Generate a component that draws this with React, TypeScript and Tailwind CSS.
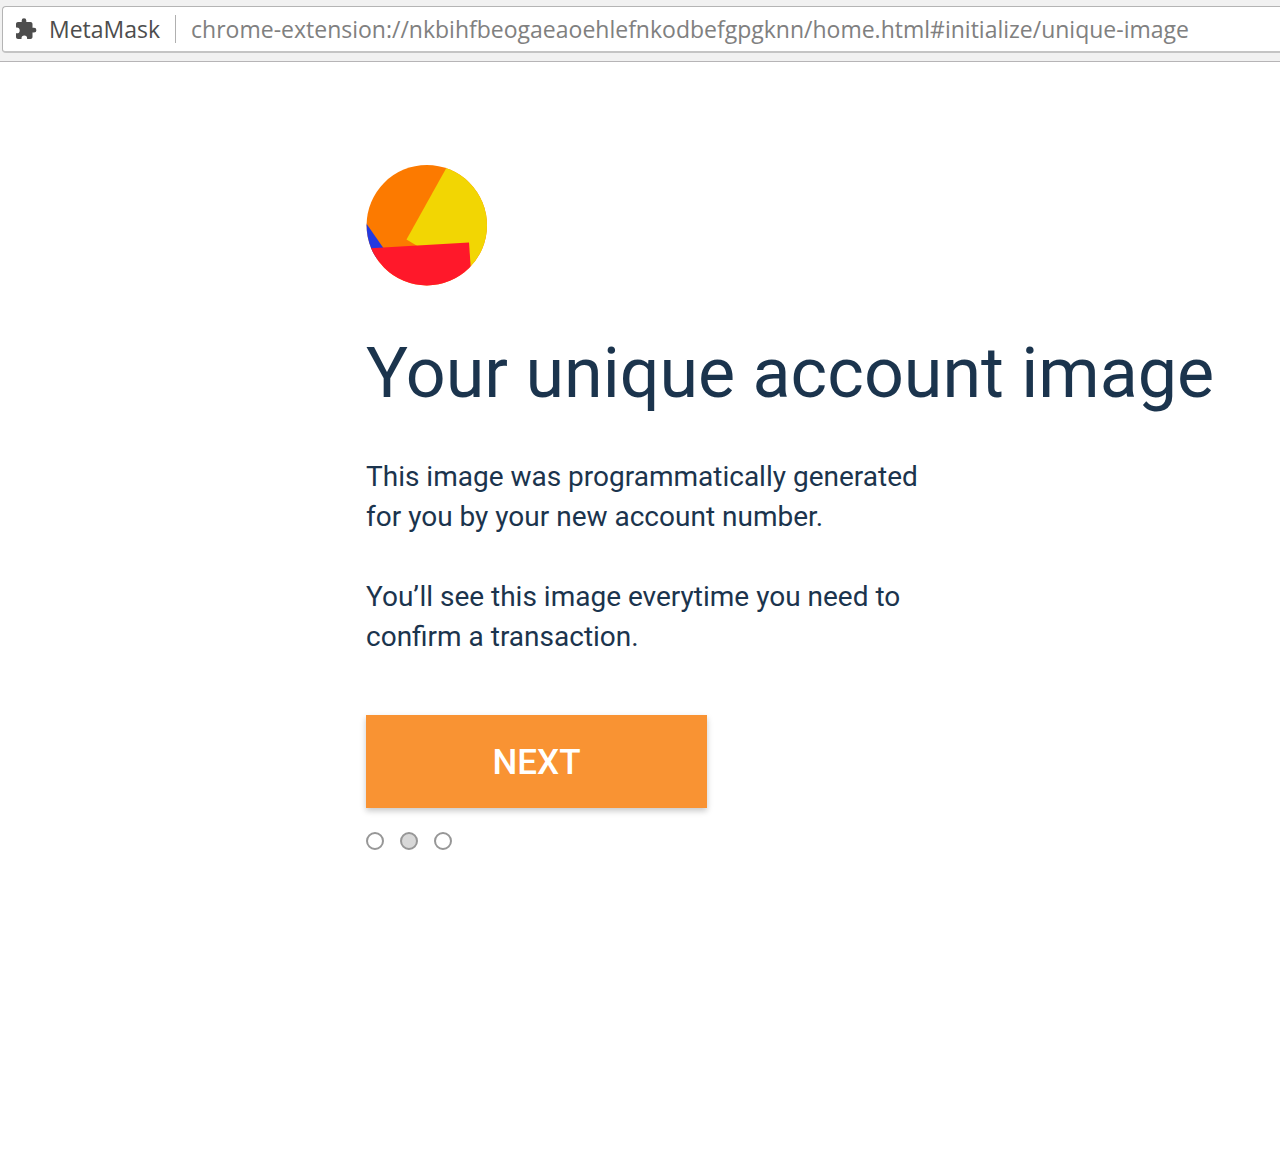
import React from "react";

const dots = [false, true, false];

export default function App() {
  return (
    <div className="min-h-screen bg-white font-['Roboto',sans-serif] text-[#1b344d]">
      <header className="border-b border-[#b6b4b6] bg-[#f1f1f1] pt-1.5 pb-2 pl-0.5">
        <form className="flex h-[47px] items-center rounded-l-sm border border-r-0 border-b-2 border-[#b4b4b4] border-b-[#c4c4c4] bg-white pl-3 font-['Open_Sans','Noto_Sans',sans-serif] text-[23px]" onSubmit={(e) => e.preventDefault()}>
          <svg viewBox="1 0 24 24" className="mr-2.5 size-6 shrink-0 fill-[#4d4d4d]" aria-hidden="true">
            <path d="M21 10.800H19.500V7c0-1.100-.9-2-2-2h-4.200V3.500a2.300 2.300 0 0 0-4.600 0V5H5c-1.100 0-2 .9-2 2v3.500h.8a2.900 2.900 0 0 1 0 5.800H3V20c0 1.100.9 2 2 2h3.500v-.8a2.800 2.800 0 0 1 5.600 0V22h3.400c1.100 0 2-.9 2-2v-4.400H21a2.400 2.400 0 0 0 0-4.800z" transform="translate(-1 0)" />
          </svg>
          <span className="text-[#4d4d4d]">MetaMask</span>
          <span className="mx-[15px] h-7 w-px bg-[#b0b0b0]" />
          <input aria-label="Address" readOnly className="min-w-0 flex-1 bg-transparent text-[#808080] outline-none" value="chrome-extension://nkbihfbeogaeaoehlefnkodbefgpgknn/home.html#initialize/unique-image" />
        </form>
      </header>
      <main className="pt-[103px] pl-[366px]">
        <svg viewBox="0 0 121 121" className="size-[121px]" role="img" aria-label="Account image">
          <clipPath id="avatar"><circle cx="60.8" cy="60.2" r="60.2" /></clipPath>
          <g clipPath="url(#avatar)">
            <path fill="#fc7a00" d="M0 0h121v121H0z" />
            <path fill="#f2d603" d="M82 0 40.500 74.500l45 27H121V0z" />
            <path fill="#2339e0" d="M0 58 25 94H0z" />
            <path fill="#ff182a" d="m0 83.500 103-6 3 43.500H0z" />
          </g>
        </svg>
        <h1 className="mt-10 text-[70px] leading-[94px] whitespace-nowrap">Your unique account image</h1>
        <p className="mt-[37px] w-[580px] text-[28px] leading-10">This image was programmatically generated for you by your new account number.</p>
        <p className="mt-10 w-[580px] text-[28px] leading-10">You’ll see this image everytime you need to confirm a transaction.</p>
        <button className="mt-[58px] block h-[93px] w-[341px] bg-[#f99333] pt-1 text-[35px] font-medium text-white shadow-[0_3px_6px_rgba(0,0,0,0.22)]">NEXT</button>
        <div className="mt-6 flex gap-4">
          {dots.map((on, i) => (
            <span key={i} className={on ? "size-[18px] rounded-full border-2 border-[#979797] bg-[#d8d8d8]" : "size-[18px] rounded-full border-2 border-[#979797] bg-white"} />
          ))}
        </div>
      </main>
    </div>
  );
}
